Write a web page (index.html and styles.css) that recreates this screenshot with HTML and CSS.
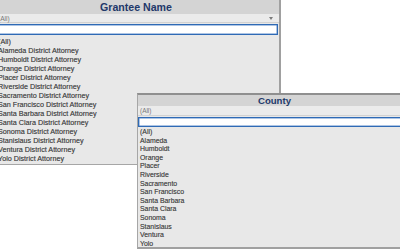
FILE: index.html
```html
<!DOCTYPE html>
<html lang="en">
<head>
<meta charset="utf-8">
<title>Filters</title>
<link rel="stylesheet" href="styles.css">
</head>
<body>
<div class="panel grantee">
<div class="head">Grantee Name</div>
<div class="current"><span>(All)</span><span class="arrow"></span></div>
<div class="search"></div>
<ul class="items">
<li>(All)</li>
<li>Alameda District Attorney</li>
<li>Humboldt District Attorney</li>
<li>Orange District Attorney</li>
<li>Placer District Attorney</li>
<li>Riverside District Attorney</li>
<li>Sacramento District Attorney</li>
<li>San Francisco District Attorney</li>
<li>Santa Barbara District Attorney</li>
<li>Santa Clara District Attorney</li>
<li>Sonoma District Attorney</li>
<li>Stanislaus District Attorney</li>
<li>Ventura District Attorney</li>
<li>Yolo District Attorney</li>
</ul>
</div>
<div class="panel county">
<div class="head">County</div>
<div class="current"><span>(All)</span></div>
<div class="search"></div>
<ul class="items">
<li>(All)</li>
<li>Alameda</li>
<li>Humboldt</li>
<li>Orange</li>
<li>Placer</li>
<li>Riverside</li>
<li>Sacramento</li>
<li>San Francisco</li>
<li>Santa Barbara</li>
<li>Santa Clara</li>
<li>Sonoma</li>
<li>Stanislaus</li>
<li>Ventura</li>
<li>Yolo</li>
</ul>
</div>
</body>
</html>
```

FILE: styles.css
```css
body {
margin: 0;
background: #fff;
font-family: "Liberation Sans", Arial, sans-serif;
overflow: hidden;
}
.panel {
position: absolute;
box-sizing: border-box;
background: #e8e8e8;
border: 1px solid #a6a6a6;
}
.grantee {
left: -8px;
top: -1px;
width: 289px;
height: 166px;
border-right: 2px solid #a0a0a0;
}
.county {
left: 137px;
top: 93px;
width: 275px;
height: 156px;
border-top: 2px solid #8f8f8f;
border-bottom: 2px solid #a0a0a0;
}
.head {
background: #d4d4d4;
color: #22386a;
font-weight: bold;
text-align: center;
}
.grantee .head {
height: 14px;
line-height: 14px;
font-size: 10.6px;
}
.county .head {
height: 11px;
line-height: 12px;
font-size: 9.6px;
}
.current {
display: flex;
justify-content: space-between;
align-items: center;
background: #ebebeb;
border-bottom: 1px solid #d2d2d2;
color: #777;
}
.grantee .current {
height: 8px;
font-size: 6.6px;
padding: 0 6px 0 5px;
}
.county .current {
height: 9px;
font-size: 6.4px;
padding: 0 2px;
}
.arrow {
width: 0;
height: 0;
border-left: 2px solid transparent;
border-right: 2px solid transparent;
border-top: 3px solid #7a7a7a;
}
.search {
background: #fff;
border: 1px solid #2f6ab5;
box-shadow: inset 0 0 0 0.5px #5d8ccb;
}
.grantee .search {
height: 9px;
margin: 1px 1px 0 1px;
}
.county .search {
height: 8px;
margin: 1px 0 0 0;
}
.items {
list-style: none;
margin: 0;
color: #4f4f4f;
text-shadow: 0 0 0.4px #777;
}
.grantee .items {
padding: 2px 0 0 5px;
font-size: 7.2px;
line-height: 9px;
}
.county .items {
padding: 1px 0 0 2px;
font-size: 6.9px;
line-height: 8.6px;
}
```
